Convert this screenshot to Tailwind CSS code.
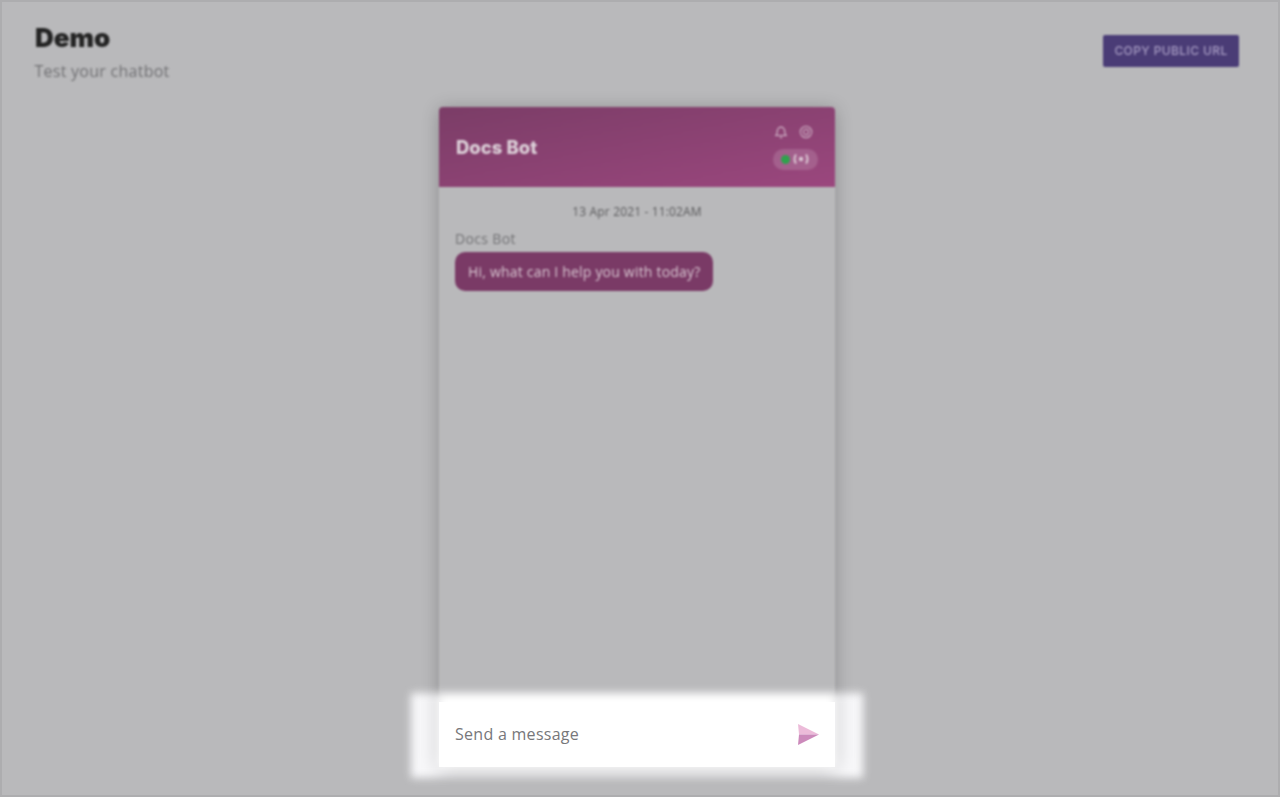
<!DOCTYPE html>
<html lang="en">
<head>
    <meta charset="UTF-8">
    <meta name="viewport" content="width=device-width, initial-scale=1.0">
    <title>Demo</title>
    <script src="https://cdn.jsdelivr.net/npm/@tailwindcss/browser@4"></script>
</head>
<body class="bg-[#b9b9bb] font-['Open_Sans',sans-serif]">
    <div class="relative w-[1280px] h-[797px] overflow-hidden border-2 border-[#adadaf]">
        <!-- page behind the dimmed overlay -->
        <div class="blur-[1.2px] w-[1276px] h-[793px]">
            <div class="flex justify-between pl-[33px] pr-[39px] pt-[20px] h-[105px]">
                <div>
                    <h1 class="font-['Inter',sans-serif] font-black text-[26px] leading-[32px] text-[#232323]">Demo</h1>
                    <p class="text-base leading-[22px] mt-[6px] ml-[-0.5px] tracking-[0.26px] text-[#707073]">Test your chatbot</p>
                </div>
                <button class="mt-[13px] w-[136px] h-[32px] rounded-[2px] bg-[#4a3c76] font-['Inter',sans-serif] font-medium text-[12px] tracking-[0.4px] text-[#a89dc4]">COPY PUBLIC URL</button>
            </div>
            <div class="ml-[437px] w-[396px] h-[660px] rounded-t-[4px] bg-[#b9b9bb] shadow-[0_2px_18px_rgba(0,0,0,0.24)]">
                <div class="flex justify-between items-center h-[80px] pl-[17px] pr-[17px] rounded-t-[4px] bg-gradient-to-br from-[#7b3d67] to-[#9b477e]">
                    <span class="font-['Inter',sans-serif] font-extrabold text-[18.500px] mt-[2px] text-[#dcd0d8]">Docs Bot</span>
                    <div class="flex flex-col items-end gap-[10px]">
                        <div class="flex items-center gap-[11px] pr-[5px]">
                            <svg class="w-[14px] h-[14px]" viewBox="0 0 14 14" fill="none" stroke="#d3b9cb" stroke-width="1.200">
                                <path d="M2 10.500c1-1 1.300-2 1.300-4.200C3.300 4 5 2.200 7 2.200S10.700 4 10.700 6.300c0 2.200.3 3.200 1.300 4.200z"/>
                                <path d="M5.800 12.500h2.400"/>
                            </svg>
                            <svg class="w-[14px] h-[14px]" viewBox="0 0 14 14" fill="none" stroke="#c9a9bf" stroke-width="1.200">
                                <circle cx="7" cy="7" r="5.700"/>
                                <circle cx="7" cy="7" r="2.600"/>
                            </svg>
                        </div>
                        <div class="flex items-center gap-[3px] w-[45px] h-[21px] pl-[8px] rounded-full bg-white/15">
                            <span class="w-[9px] h-[9px] rounded-full bg-[#2fa24d]"></span>
                            <svg class="w-[16px] h-[12px]" viewBox="0 0 16 12" fill="none" stroke="#dccad6" stroke-width="2">
                                <path d="M3 1.500c-2 2.500-2 6.500 0 9"/>
                                <path d="M13 1.500c2 2.500 2 6.500 0 9"/>
                                <circle cx="8" cy="6" r="2.200" fill="#dccad6" stroke="none"/>
                            </svg>
                        </div>
                    </div>
                </div>
                <div class="px-[16px] pt-[16px]">
                    <p class="text-center text-[12px] leading-[18px] tracking-[0.14px] text-[#59595b]">13 Apr 2021 - 11:02AM</p>
                    <p class="text-[14px] leading-[20px] mt-[8px] tracking-[0.35px] text-[#707073]">Docs Bot</p>
                    <div class="inline-block mt-[3px] h-[39px] px-[13px] rounded-[10px] bg-[#7a3a66] text-[14px] leading-[39px] tracking-[0.2px] text-[#d8c8d2]">Hi, what can I help you with today?</div>
                </div>
            </div>
        </div>

        <!-- spotlight over the composer -->
        <div class="absolute left-[409px] top-[691px] w-[452px] h-[85px] overflow-hidden bg-[#f8f8fa] blur-[4px]">
            <div class="ml-[28px] mt-[-10px] w-[396px] h-[84px] bg-white shadow-[0_2px_18px_rgba(0,0,0,0.24)]"></div>
        </div>
        <div class="absolute left-[437px] top-[700px] flex items-center justify-between w-[396px] h-[65px] pl-[16px] pr-[16px] pb-[2px] bg-white">
            <span class="text-base tracking-[0.28px] text-[#77777a]">Send a message</span>
            <svg class="w-[21px] h-[21px] mt-[2px]" viewBox="0 0 21 21">
                <path d="M0 0L21 10.500H1z" fill="#ecbbd9"/>
                <path d="M1 10.500H21L0 21z" fill="#cc8abb"/>
            </svg>
        </div>
    </div>
</body>
</html>
